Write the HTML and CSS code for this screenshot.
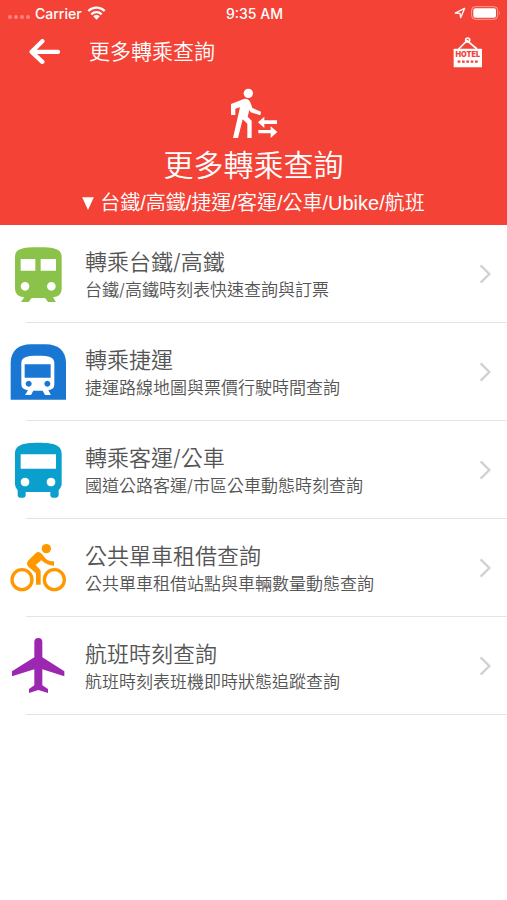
FILE: index.html
```html
<!DOCTYPE html>
<html lang="zh-Hant">
<head>
<meta charset="utf-8">
<meta name="viewport" content="width=device-width, initial-scale=1">
<title>更多轉乘查詢</title>
<link rel="stylesheet" href="styles.css">
</head>
<body>
<header class="header">
  <div class="status">
    <div class="status-side">
      <span class="signal"><i></i><i></i><i></i><i></i></span>
      <span>Carrier</span>
      <svg class="wifi" viewBox="0 0 57 42" aria-hidden="true"><path d="M4 15a35 35 0 0 1 49 0M13 25a22 22 0 0 1 31 0" fill="none" stroke="#fff" stroke-width="7"/><path d="M19 31a13 13 0 0 1 19 0l-9.500 10z" fill="#fff"/></svg>
    </div>
    <span class="clock">9:35 AM</span>
    <div class="status-side status-end">
      <svg class="locate" viewBox="0 0 36 36" aria-hidden="true"><path d="M4 18L32 4 20 32 18 19z" fill="none" stroke="#fff" stroke-width="4" stroke-linejoin="round"/></svg>
      <svg class="battery" viewBox="0 0 90 42" aria-hidden="true"><rect x="2" y="2" width="78" height="38" rx="11" fill="none" stroke="#fff" stroke-opacity=".5" stroke-width="3"/><rect x="7" y="7" width="68" height="28" rx="6" fill="#fff"/><path d="M84 14q5 7 0 14z" fill="#fff" fill-opacity=".5"/></svg>
    </div>
  </div>
  <nav class="bar">
    <button class="icon-button" type="button" aria-label="返回"><svg class="back" viewBox="88 114 96 80"><path d="M175 152H97M128 120L96 152l32 30" fill="none" stroke="#fff" stroke-width="13" stroke-linecap="round" stroke-linejoin="round"/></svg></button>
    <h1 class="bar-title">更多轉乘查詢</h1>
    <button class="icon-button" type="button" aria-label="HOTEL"><svg class="hotel" viewBox="69 108 90 96"><path d="M86 147L111 122l30 25" fill="none" stroke="#fff" stroke-width="5"/><circle cx="113" cy="120" r="6" fill="none" stroke="#fff" stroke-width="5"/><rect x="71" y="146" width="85" height="56" rx="2" fill="#fff"/><text x="113.500" y="171" text-anchor="middle" class="hotel-text">HOTEL</text><path d="M83 185h8m5 0h8m5 0h8m5 0h8m5 0h8" stroke="#f44336" stroke-width="7"/></svg></button>
  </nav>
  <section class="hero">
    <svg class="walker" viewBox="240 24 144 150" aria-hidden="true"><g fill="#fff"><circle cx="295" cy="40" r="14"/><path d="M272 61q12-8 23-2 6 4 12 25l26 11-2 11-29-9-4-7-5 20 12 12v52h-13v-43l-14-13-14 56h-15l21-92-14 4v19h-13V72z"/><path d="M324 127l19-17v11h38v11h-38v12zM382 156l-20-17v11h-37v10h37v14z"/></g></svg>
    <h2 class="hero-title">更多轉乘查詢</h2>
    <p class="hero-sub"><svg class="down" viewBox="0 0 36 40" aria-hidden="true"><path d="M0 1h36L18 40z" fill="#fff"/></svg>台鐵/高鐵/捷運/客運/公車/Ubike/航班</p>
  </section>
</header>
<main>
  <ul class="list">
    <li><a class="row" href="#train">
      <svg class="row-icon" viewBox="30 33 168 168" aria-hidden="true"><path fill="#8bc34a" fill-rule="evenodd" d="M45 66C45 42 65 37 115 37S185 42 185 66V161Q185 184 159 187L168 202H145L135 189H95L85 202H62L73 187Q45 184 45 161zM62 72V107H106V72zM122 72V107H168V72zM75 141a13 13 0 1 0 .1 0zM154 141a13 13 0 1 0 .1 0z"/></svg>
      <span class="row-text"><span class="row-title">轉乘台鐵/高鐵</span><span class="row-sub">台鐵/高鐵時刻表快速查詢與訂票</span></span>
      <svg class="chevron" viewBox="0 0 36 60" aria-hidden="true"><path d="M5 4l26 26L5 56"/></svg></a></li>
    <li><a class="row" href="#metro">
      <svg class="row-icon" viewBox="30 27 168 168" aria-hidden="true"><path fill="#1976d2" d="M32 194V84C32 46 58 28 92 28H138C172 28 198 46 198 84V194z"/><path fill="#fff" fill-rule="evenodd" d="M64 84C64 66 80 62 114 62S163 66 163 84V148Q163 164 145 166L153 180H135L128 167H100L93 180H75L84 166Q64 163 64 148zM74 88V128H152V88zM86 137a9 9 0 1 0 .1 0zM142 137a9 9 0 1 0 .1 0z"/></svg>
      <span class="row-text"><span class="row-title">轉乘捷運</span><span class="row-sub">捷運路線地圖與票價行駛時間查詢</span></span>
      <svg class="chevron" viewBox="0 0 36 60" aria-hidden="true"><path d="M5 4l26 26L5 56"/></svg></a></li>
    <li><a class="row" href="#bus">
      <svg class="row-icon" viewBox="30 30 168 168" aria-hidden="true"><path fill="#0a9fcd" fill-rule="evenodd" d="M45 66C45 40 65 32 115 32S185 40 185 66V157Q185 166 176 175V190Q175 197 168 197H158Q151 197 151 190V180H77V190Q77 197 70 197H60Q53 197 53 190V175Q45 167 45 157zM62 67V110H168V67zM75 137a13 13 0 1 0 .1 0zM153 137a13 13 0 1 0 .1 0z"/></svg>
      <span class="row-text"><span class="row-title">轉乘客運/公車</span><span class="row-sub">國道公路客運/市區公車動態時刻查詢</span></span>
      <svg class="chevron" viewBox="0 0 36 60" aria-hidden="true"><path d="M5 4l26 26L5 56"/></svg></a></li>
    <li><a class="row" href="#bike">
      <svg class="row-icon" viewBox="30 30 168 168" aria-hidden="true"><g fill="none" stroke="#ff9800" stroke-width="10"><circle cx="66" cy="149" r="30"/><circle cx="163" cy="149" r="30"/></g><g fill="#ff9800"><circle cx="139" cy="56" r="14"/><path d="M84 92L107 70Q116 62 125 71L138 87Q146 94 162 94V107Q142 107 124 91L107 105 118 116Q122 120 122 126V164H108V130L86 111Q77 102 84 92z"/></g></svg>
      <span class="row-text"><span class="row-title">公共單車租借查詢</span><span class="row-sub">公共單車租借站點與車輛數量動態查詢</span></span>
      <svg class="chevron" viewBox="0 0 36 60" aria-hidden="true"><path d="M5 4l26 26L5 56"/></svg></a></li>
    <li><a class="row" href="#flight">
      <svg class="row-icon" viewBox="30 39 168 168" aria-hidden="true"><path fill="#9c27b0" d="M103 51Q103 39 115 39T127 51V97L193 139V154L127 133V181L144 192V204L115 195 87 204V192L103 181V133L36 154V139L103 97z"/></svg>
      <span class="row-text"><span class="row-title">航班時刻查詢</span><span class="row-sub">航班時刻表班機即時狀態追蹤查詢</span></span>
      <svg class="chevron" viewBox="0 0 36 60" aria-hidden="true"><path d="M5 4l26 26L5 56"/></svg></a></li>
  </ul>
</main>
</body>
</html>
```
FILE: styles.css
```css
* { box-sizing: border-box; }

body {
  margin: 0;
  background: #fff;
  color: #555;
  font-family: Inter, "Noto Sans CJK TC", sans-serif;
  font-weight: 350;
}

h1, h2, p, ul { margin: 0; padding: 0; font-weight: inherit; }
svg { display: block; flex: none; }

.header {
  background: #f44336;
  color: #fff;
  padding-bottom: 7px;
}

.status {
  display: flex;
  align-items: center;
  height: 26px;
  padding: 0 6px 0 8px;
  font-size: 14px;
  font-weight: 500;
}
.status-side { display: flex; flex: 1; align-items: center; gap: 5px; }
.status-end { justify-content: flex-end; }
.signal { display: flex; gap: 2px; padding-top: 8px; opacity: .35; }
.signal i { width: 4px; height: 4px; border-radius: 50%; background: #fff; }
.wifi { width: 19px; height: 14px; }
.locate { width: 12px; height: 12px; }
.battery { width: 30px; height: 14px; }

.bar {
  display: flex;
  align-items: center;
  height: 52px;
  padding: 0 24px 0 29px;
}
.icon-button {
  padding: 0;
  border: 0;
  background: none;
  cursor: pointer;
}
.back { width: 32px; height: 27px; }
.hotel { width: 30px; height: 32px; }
.hotel-text { font: 900 22px Inter, sans-serif; fill: #f44336; }
.bar-title { flex: 1; margin-left: 28px; font-size: 21px; line-height: 28px; }

.hero {
  display: flex;
  flex-direction: column;
  align-items: center;
  padding-top: 10px;
}
.walker { width: 48px; height: 50px; }
.hero-title { margin-top: 8px; font-size: 30px; line-height: 38px; }
.hero-sub {
  display: flex;
  align-items: center;
  gap: 6px;
  margin-top: 4px;
  font-family: "Liberation Sans", "Noto Sans CJK TC", sans-serif;
  font-size: 20px;
  line-height: 30px;
}
.down { width: 12px; height: 13px; }

.list { list-style: none; }
.row {
  position: relative;
  display: flex;
  align-items: center;
  height: 98px;
  padding: 0 16px 0 10px;
  color: inherit;
  text-decoration: none;
}
.row::after {
  content: "";
  position: absolute;
  left: 26px;
  right: 0;
  bottom: 0;
  height: 1px;
  background: #e4e4e4;
}
.row-icon { width: 56px; height: 56px; }
.row-text { flex: 1; margin-left: 19px; padding-top: 3px; }
.row-title, .row-sub { display: block; }
.row-title { font-size: 22px; line-height: 28px; }
.row-sub { font-size: 17px; line-height: 28px; }
.chevron { width: 12px; height: 20px; }
.chevron path { fill: none; stroke: #d1d1d4; stroke-width: 7; }
```
